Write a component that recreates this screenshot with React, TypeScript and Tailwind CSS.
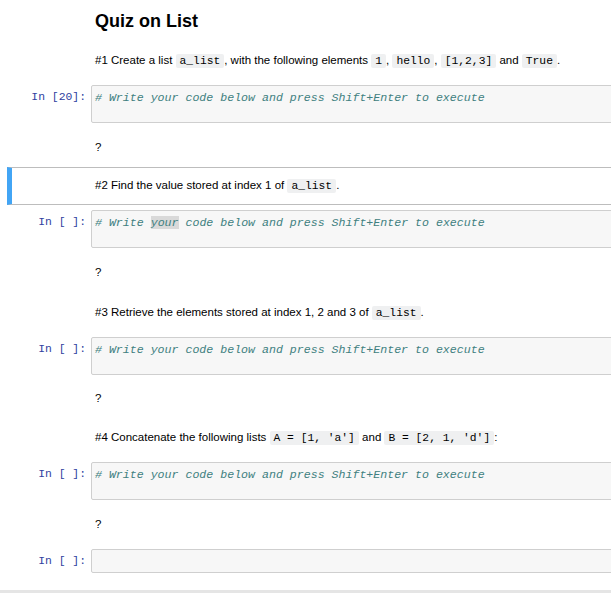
import React from 'react';

const sans = "font-['Liberation_Sans',Arial,sans-serif]";
const mono = "font-['Liberation_Mono','Courier_New',monospace]";

const Code: React.FC<{ children: React.ReactNode }> = ({ children }) => (
  <code className={`${mono} text-[11.3px] bg-[#eff0f1] px-[4px] py-[1px] rounded-[2px] whitespace-pre`}>{children}</code>
);

const Md: React.FC<{ className?: string; children: React.ReactNode }> = ({ className = '', children }) => (
  <div className={`flex items-center pl-[95px] text-[11.5px] text-black ${className}`}>
    <div className="whitespace-pre">{children}</div>
  </div>
);

const CodeCell: React.FC<{ prompt: string; className?: string; children?: React.ReactNode }> = ({
  prompt,
  className = 'h-[38px]',
  children,
}) => (
  <div className="flex items-start">
    <div className={`${mono} w-[91px] pr-[5px] pt-[4px] text-right text-[11.4px] leading-[16px] text-[#303f9f] whitespace-pre`}>
      {prompt}
    </div>
    <div className={`flex-1 bg-[#f7f7f7] border border-[#cfcfcf] rounded-[2px] pl-[3px] pt-[4px] ${className}`}>
      <div className={`${mono} italic text-[11.6px] leading-[16px] text-[#408080] whitespace-pre`}>{children}</div>
    </div>
  </div>
);

const comment = '# Write your code below and press Shift+Enter to execute';

export default function App() {
  return (
    <div className={`w-full h-[593px] overflow-hidden bg-white ${sans}`}>
      <div className="w-[630px] flex flex-col">
        <div className="h-[40px] flex items-center pl-[95px] pt-[3px]">
          <h1 className="text-[18px] font-bold text-black">Quiz on List</h1>
        </div>

        <Md className="h-[42px]">
          #1 Create a list <Code>a_list</Code>, with the following elements <Code>1</Code>, <Code>hello</Code>,{' '}
          <Code>[1,2,3]</Code> and <Code>True</Code>.
        </Md>

        <div className="mt-[3px]">
          <CodeCell prompt="In [20]:">{comment}</CodeCell>
        </div>

        <Md className="mt-[12px] h-[26px]">?</Md>

        {/* selected markdown cell */}
        <div className="mt-[6px] ml-[7px] h-[38px] border-y border-[#bdbdbd] border-l-[5px] border-l-[#42a5f5] flex items-center pl-[83px] text-[11.5px] text-black">
          <div className="whitespace-pre">
            #2 Find the value stored at index 1 of <Code>a_list</Code>.
          </div>
        </div>

        <div className="mt-[5px]">
          <CodeCell prompt="In [ ]:">
            # Write <span className="bg-[#d9d9d9]">your</span> code below and press Shift+Enter to execute
          </CodeCell>
        </div>

        <Md className="mt-[12px] h-[26px]">?</Md>

        <Md className="mt-[14px] h-[26px]">
          #3 Retrieve the elements stored at index 1, 2 and 3 of <Code>a_list</Code>.
        </Md>

        <div className="mt-[11px]">
          <CodeCell prompt="In [ ]:">{comment}</CodeCell>
        </div>

        <Md className="mt-[11px] h-[26px]">?</Md>

        <Md className="mt-[13px] h-[26px]">
          #4 Concatenate the following lists <Code>A = [1, 'a']</Code> and <Code>B = [2, 1, 'd']</Code>:
        </Md>

        <div className="mt-[11px]">
          <CodeCell prompt="In [ ]:">{comment}</CodeCell>
        </div>

        <Md className="mt-[12px] h-[26px]">?</Md>

        <div className="mt-[11px]">
          <CodeCell prompt="In [ ]:" className="h-[24px]" />
        </div>

        <div className="mt-[17px] h-[10px] bg-[#e5e5e5]" />
      </div>
    </div>
  );
}
